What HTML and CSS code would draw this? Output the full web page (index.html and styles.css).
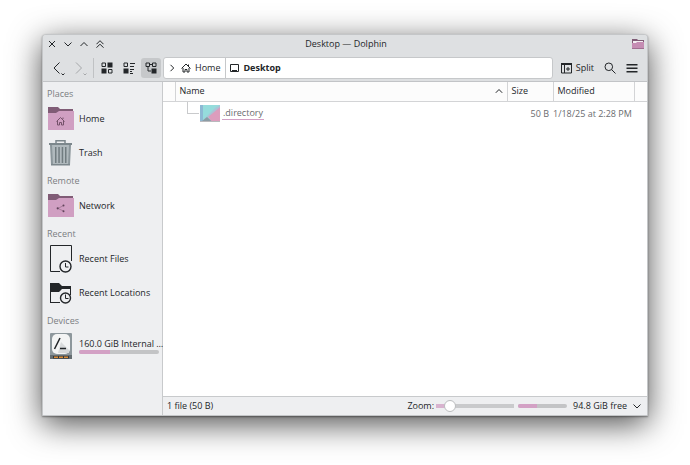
FILE: index.html
```html
<!DOCTYPE html>
<html lang="en">
  <head>
    <meta charset="UTF-8" />
    <meta name="viewport" content="width=device-width,initial-scale=1.0" />
    <title>Desktop — Dolphin</title>
    <link rel="stylesheet" href="styles.css">
  </head>
  <body>
    <div class="window">
      <header class="window-header">
        <div class="titlebar">
          <div class="window-controls">
            <button type="button" aria-label="Close"><svg width="8" height="8" viewBox="0 0 8 8"><path d="M1 1l6 6M7 1l-6 6"/></svg></button>
            <button type="button" aria-label="Minimize"><svg width="8" height="8" viewBox="0 0 8 8"><path d="M.5 2.500L4 6l3.500-3.500"/></svg></button>
            <button type="button" aria-label="Maximize"><svg width="8" height="8" viewBox="0 0 8 8"><path d="M.5 6L4 2.500 7.500 6"/></svg></button>
            <button type="button" aria-label="Keep above"><svg width="8" height="8" viewBox="0 0 8 8"><path d="M.5 4.200L4 .7l3.500 3.500M.5 7.700L4 4.200l3.500 3.500"/></svg></button>
          </div>
          <h1>Desktop — Dolphin</h1>
          <div class="app-icon">
            <svg width="12" height="12" viewBox="0 0 12 12"><path fill="#805c76" d="M0 1h5l1 1h6v3H0z"/><path fill="#f4edf2" d="M1 3h10v3H1z"/><path fill="#c58db3" d="M0 5h4l1-1h7v7H0z"/><path fill="#a06f91" d="M0 10h12v1H0z"/></svg>
          </div>
        </div>
        <div class="toolbar">
          <div class="history">
            <button type="button" class="tool" aria-label="Back"><svg width="16" height="18" viewBox="0 0 16 18"><path d="M8.500 3.500L3 9l5.500 5.500M10.500 14.500l1.500 1.500 1.500-1.500"/></svg></button>
            <button type="button" class="tool" aria-label="Forward" disabled><svg width="16" height="18" viewBox="0 0 16 18"><path d="M3 3.500L8.500 9 3 14.500M10.500 14.500l1.500 1.500 1.500-1.500"/></svg></button>
          </div>
          <div class="views">
            <button type="button" class="tool" aria-label="Icons"><svg width="12" height="12" viewBox="0 0 12 12"><path d="M1 1h3.500v3.500H1zM7.500 7.500H11V11H7.500z"/><path class="solid" d="M6.500.5h5v5h-5zM.5 6.500h5v5h-5z"/></svg></button>
            <button type="button" class="tool" aria-label="Compact"><svg width="12" height="12" viewBox="0 0 12 12"><path d="M1 1h3.500v3.500H1zM7 1.500h5M7 4.500h4M7 7.500h4M7 9.500h2M7 11.500h3"/><path class="solid" d="M.5 6.500h5v5h-5z"/></svg></button>
            <button type="button" class="tool active" aria-label="Details"><svg width="12" height="12" viewBox="0 0 12 12"><path d="M1 1h3.500v3.500H1zM7.500 1H11v3.500H7.500zM4.500 2.500h3M3 4.500v4.500h3"/><path class="solid" d="M6.500 6.500h5v5h-5z"/></svg></button>
          </div>
          <nav class="location" aria-label="Location">
            <a href="#" class="crumb">
              <svg width="6" height="8" viewBox="0 0 6 8"><path d="M1.500 .8L4.700 4 1.500 7.200"/></svg>
              <svg class="place" width="10" height="10" viewBox="0 0 10 10"><path d="M.5 5.500L5 1l4.500 4.500M7.500 3V1.500M2 5v4h2V6.500h2V9h2V5"/></svg>
              Home
            </a>
            <a href="#" class="crumb current">
              <svg width="9" height="10" viewBox="0 0 9 10"><path d="M.5 1.500h8v7h-8zM2 7.500h5"/></svg>
              Desktop
            </a>
          </nav>
          <div class="actions">
            <button type="button" class="tool split"><svg width="11" height="12" viewBox="0 0 11 12"><path d="M.5 1.500h10v9.500H.5zM3.500 3v8M7 5v4M5 7h4"/><path class="solid" d="M0 1h11v2H0z"/></svg>Split</button>
            <button type="button" class="tool" aria-label="Search"><svg width="12" height="12" viewBox="0 0 12 12"><circle cx="4.800" cy="4.800" r="3.800"/><path d="M7.600 7.600L11.500 11.500"/></svg></button>
            <button type="button" class="tool" aria-label="Open menu"><svg width="12" height="10" viewBox="0 0 12 10"><path class="solid" d="M.5 1h11v1.600H.5zM.5 4.500h11v1.600H.5zM.5 8h11v1.600H.5z"/></svg></button>
          </div>
        </div>
      </header>

      <div class="content">
        <aside class="places">
          <h2>Places</h2>
          <a href="#" class="place-item">
            <svg width="26" height="26" viewBox="0 0 26 26"><path fill="#805c76" d="M0 1h10l2 2h13v4H0z"/><path fill="#d09fc2" d="M0 7h8l3-2h15v19H0z"/><path class="line" stroke="#75516b" d="M8.500 15.500L12.500 11.500l4 4M15 13v-1.500M9.500 15v4h2v-2.500h2V19h2v-4"/></svg>
            <span>Home</span>
          </a>
          <a href="#" class="place-item">
            <svg width="26" height="28" viewBox="0 0 26 28"><path fill="none" stroke="#7c878c" stroke-width="1.500" d="M8 4V1.800h9V4"/><path fill="#7c878c" d="M1 4h23v2H1z"/><path fill="#b0b9bd" d="M3 6h19v20H3z"/><path fill="#8b969b" d="M2 6h2l1 20H3zM21 6h2l-1 20h-2z"/><path fill="#717c80" d="M7 8h1.500v16H7zM10.300 8h1.500v16h-1.500zM13.700 8h1.500v16h-1.500zM17 8h1.500v16H17z"/><path fill="#7c878c" d="M3 25h19v1.500H3z"/></svg>
            <span>Trash</span>
          </a>
          <h2>Remote</h2>
          <a href="#" class="place-item">
            <svg width="26" height="26" viewBox="0 0 26 26"><path fill="#805c76" d="M0 1h10l2 2h13v4H0z"/><path fill="#d09fc2" d="M0 7h8l3-2h15v19H0z"/><path class="line" stroke="#a87b9b" d="M15.500 12.500L10 15.500l5.500 2.500"/><circle cx="15.500" cy="12.500" r="1" fill="#60445a"/><circle cx="9.700" cy="15.300" r="1.100" fill="#60445a"/><circle cx="15.500" cy="18.300" r="1" fill="#60445a"/></svg>
            <span>Network</span>
          </a>
          <h2>Recent</h2>
          <a href="#" class="place-item">
            <svg width="26" height="28" viewBox="0 0 26 28"><path class="line" stroke="#232629" d="M12 26.500H2.500v-26h21V16"/><circle class="line" stroke="#232629" stroke-width="1.400" cx="17.500" cy="21.500" r="5.500"/><path class="line" stroke="#232629" d="M17.500 18v4h3"/></svg>
            <span>Recent Files</span>
          </a>
          <a href="#" class="place-item">
            <svg width="26" height="24" viewBox="0 0 26 24"><path fill="#232629" d="M2 2h9l3 3h9v3h-9l-3 3H3v10h9v1H2zM22 8h1v6h-1z"/><circle class="line" stroke="#232629" stroke-width="1.400" cx="17.500" cy="17" r="5"/><path class="line" stroke="#232629" d="M17.500 13.500v4h3"/></svg>
            <span>Recent Locations</span>
          </a>
          <h2>Devices</h2>
          <a href="#" class="place-item">
            <svg width="26" height="28" viewBox="0 0 26 28"><rect x="2" y="1" width="22" height="26" rx="1" fill="#8d979c"/><path fill="#656d71" d="M2 23h22v4H2z"/><rect x="4" y="2" width="18" height="20" rx="5" fill="#f3f4f4"/><path fill="#d8dadb" d="M13 10l8 8v3H10z"/><path fill="none" stroke="#232629" stroke-width="1.500" d="M6.500 17l5.500-11"/><path fill="none" stroke="#232629" stroke-width="1.500" d="M12 16.500h6"/><path fill="#30363a" d="M5 24h16v2.500H5z"/><path fill="#d98c38" d="M6 24.500h4v1.500H6zM11 24.500h4v1.500h-4zM16 24.500h4v1.500h-4z"/></svg>
            <span class="device">
              <span id="disk-name">160.0 GiB Internal …</span>
              <progress aria-labelledby="disk-name" value="39" max="100"></progress>
            </span>
          </a>
        </aside>

        <main class="view">
          <table class="files">
            <thead>
              <tr>
                <th class="edge"></th>
                <th class="name"><div>Name <svg width="8" height="6" viewBox="0 0 8 6"><path d="M.8 4.800L4 1.500l3.200 3.300"/></svg></div></th>
                <th class="size">Size</th>
                <th class="modified">Modified</th>
                <th class="end"></th>
              </tr>
            </thead>
            <tbody>
              <tr>
                <td></td>
                <td>
                  <div class="file">
                    <span class="branch"></span>
                    <svg width="22" height="20" viewBox="0 0 22 20"><path fill="#95dcdc" d="M1 1h20v17H1z"/><path fill="#8db9d4" d="M1 1h3v17H1z"/><path fill="#dd9dbd" d="M21 3v15h-8l-4-5z"/><path fill="#c9a6cc" d="M21 1v3L9 13l-4 2 11-11z" opacity=".4"/><path fill="#8c9ca5" d="M3 17l5-4 5 4.500z"/><path fill="#b9b9bd" d="M1 17h20v1H1z"/></svg>
                    <a href="#">.directory</a>
                  </div>
                </td>
                <td class="size">50 B</td>
                <td class="modified">1/18/25 at 2:28 PM</td>
                <td></td>
              </tr>
            </tbody>
          </table>
          <footer class="statusbar">
            <span class="summary">1 file (50 B)</span>
            <label for="zoom">Zoom:</label>
            <input type="range" id="zoom" min="0" max="16" value="2" />
            <progress class="space" aria-label="Disk usage" value="39" max="100"></progress>
            <button type="button" class="free">94.8 GiB free <svg width="8" height="8" viewBox="0 0 8 8"><path d="M.5 2.500L4 6l3.500-3.500"/></svg></button>
          </footer>
        </main>
      </div>
    </div>
  </body>
</html>
```

FILE: styles.css
```css
* {
  margin: 0;
  padding: 0;
  box-sizing: border-box;
}
body {
  display: flex;
  min-height: 100vh;
  padding: 34px 42px 49px;
  background: #fff;
  color: #232629;
  font-family: "Open Sans", "Noto Sans", sans-serif;
  font-size: 9px;
  line-height: 12px;
}
button {
  display: flex;
  align-items: center;
  justify-content: center;
  border: none;
  background: none;
  color: inherit;
  font: inherit;
}
a {
  color: inherit;
  text-decoration: none;
}
svg {
  flex: none;
  fill: none;
  stroke: #232629;
}
svg .solid {
  fill: #232629;
  stroke: none;
}
.window {
  flex: 1;
  min-width: 0;
  display: flex;
  flex-direction: column;
  border: 1px solid #c4c6c8;
  border-radius: 4px 4px 0 0;
  background: #eeeff1;
  box-shadow: 0 8px 32px rgba(0,0,0,0.7), 0 1px 2px rgba(0,0,0,0.4);
}
.window-header {
  background: #dee0e2;
  border-bottom: 1px solid #c2c4c7;
  border-radius: 3px 3px 0 0;
}
.titlebar {
  display: grid;
  grid-template-columns: 1fr auto 1fr;
  align-items: center;
  height: 18px;
  padding: 0 3px 0 5px;
}
.titlebar h1 {
  font-size: 9px;
  font-weight: 400;
}
.window-controls {
  display: flex;
  gap: 8px;
}
.app-icon {
  display: flex;
  justify-content: flex-end;
}
.app-icon svg,
.place-item svg,
.file svg {
  stroke: none;
}
.toolbar {
  display: flex;
  align-items: center;
  height: 28px;
  padding: 2px 6px 0 8px;
}
.tool {
  height: 20px;
}
.tool:disabled {
  opacity: 0.3;
}
.history {
  display: flex;
  gap: 6px;
  padding-right: 4px;
  border-right: 1px solid #c0c2c4;
}
.views {
  display: flex;
  gap: 2px;
  padding: 0 2px 0 3px;
}
.views .tool {
  width: 20px;
  border-radius: 3px;
}
.views .active {
  background: #c6c8ca;
}
.location {
  flex: 1;
  display: flex;
  height: 22px;
  border: 1px solid #c6c8ca;
  border-radius: 3px;
  background: #fff;
}
.crumb {
  display: flex;
  align-items: center;
  gap: 4px;
  padding: 0 5px;
}
.crumb .place {
  margin-left: 2px;
}
.crumb.current {
  padding-left: 4px;
  border-left: 1px solid #c6c8ca;
  font-weight: 700;
}
.actions {
  display: flex;
  gap: 10px;
  padding: 0 3px 0 8px;
}
.split {
  gap: 4px;
}
.content {
  flex: 1;
  display: flex;
}
.places {
  width: 120px;
  padding: 4px 3px 0 4px;
  border-right: 1px solid #c8cacc;
}
.places h2 {
  height: 16px;
  color: #7b7e82;
  font-size: 9px;
  font-weight: 400;
  line-height: 16px;
}
.place-item + h2 {
  margin-top: 3px;
}
.place-item {
  display: flex;
  align-items: center;
  gap: 5px;
  height: 34px;
  padding-left: 1px;
  white-space: nowrap;
}
.line {
  fill: none;
}
.device {
  flex: 1;
  display: flex;
  flex-direction: column;
  min-width: 0;
}
progress {
  appearance: none;
  display: block;
  width: 100%;
  height: 4px;
  border: none;
}
progress::-webkit-progress-bar {
  border-radius: 2px;
  background: #c3c4c6;
  overflow: hidden;
}
progress::-webkit-progress-value {
  background: #d3a1c5;
}
.view {
  flex: 1;
  min-width: 0;
  display: flex;
  flex-direction: column;
  justify-content: space-between;
  background: #fff;
}
.files {
  width: 100%;
  border-collapse: collapse;
  table-layout: fixed;
}
.files th {
  height: 19px;
  padding: 0 4px;
  border-right: 1px solid #d3d4d6;
  border-bottom: 1px solid #d3d4d6;
  background: #fcfcfc;
  font-weight: 400;
  text-align: left;
}
.files th:last-child {
  border-right: none;
}
.files .edge {
  width: 12px;
  padding: 0;
}
.files th.size {
  width: 46px;
}
.files th.modified {
  width: 81px;
}
.files .end {
  width: 13px;
  padding: 0;
}
.name div {
  display: flex;
  align-items: center;
  justify-content: space-between;
}
.files td {
  height: 24px;
  color: #6a6c6f;
}
.files td.size,
.files td.modified {
  padding-right: 4px;
  text-align: right;
  white-space: nowrap;
}
.file {
  display: flex;
  align-items: center;
  height: 24px;
  padding-left: 12px;
}
.branch {
  align-self: flex-start;
  width: 12px;
  height: 12px;
  border-left: 1px solid #c9cacc;
  border-bottom: 1px solid #c9cacc;
}
.file a {
  margin-left: 1px;
  padding: 0 1px;
  border-bottom: 1px solid #d3a1c5;
}
.statusbar {
  display: flex;
  align-items: center;
  height: 19px;
  padding: 0 6px 0 4px;
  border-top: 1px solid #c8cacc;
  background: #eeeff1;
}
.summary {
  flex: 1;
}
#zoom {
  appearance: none;
  width: 78px;
  height: 12px;
  margin: 0 4px 0 2px;
  border-radius: 2px;
  background: linear-gradient(90deg, #d8b3cf 18%, #c9cacc 18%) center / 100% 4px no-repeat;
}
#zoom::-webkit-slider-thumb {
  appearance: none;
  width: 12px;
  height: 12px;
  border: 1px solid #bbbdbf;
  border-radius: 50%;
  background: #fff;
}
.space {
  width: 49px;
  margin-right: 6px;
}
.free {
  gap: 6px;
}
```
